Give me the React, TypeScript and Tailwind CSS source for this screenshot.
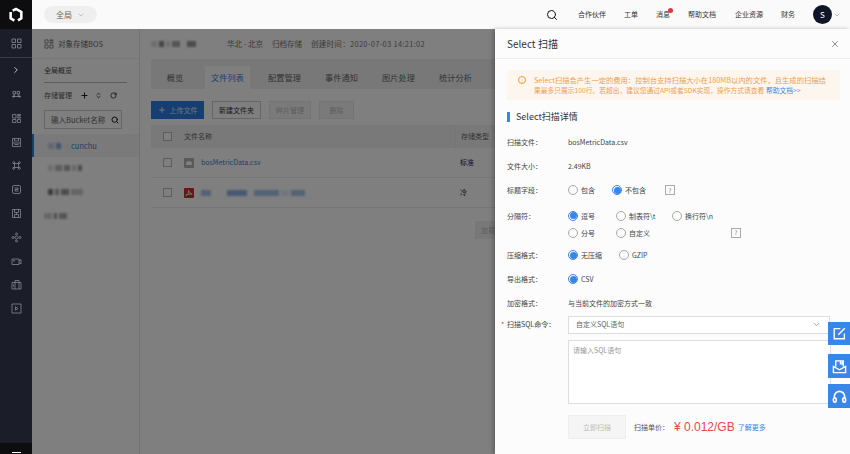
import React from "react";
import { ChevronDown, ChevronRight, Plus, RotateCw, Search, X, ChevronsUpDown } from "lucide-react";

const sideIcons = [
  <><path d="M4 5h5v5H4zM12 5h5v5h-5z" /><path d="M6.500 10v5M14.500 10v5M3 15h16" /><circle cx="5" cy="15" r="1.500" /><circle cx="17" cy="15" r="1.500" /></>,
  <><path d="M3 3h7v7H3zM3 13h7v6H3zM13 13h6v6h-6zM13 3h6v2h-6zM13 8h6v2h-6z" /></>,
  <><path d="M3 3h16v16H3zM7 3v5h8V3M3 12h16M7 15h8" /></>,
  <><path d="M7 7h8v8H7zM7 7H4a2 2 0 1 1 3-3zM15 7V4a2 2 0 1 1 3 3zM7 15v3a2 2 0 1 1-3-3zM15 15h3a2 2 0 1 1-3 3z" /></>,
  <><rect x="3" y="3" width="16" height="16" rx="3" /><path d="M7 8h7v3H8v3h7" /></>,
  <><path d="M3 3h16v16H3zM7 3v6h8V3M7 19v-6h8v6M11 9v4" /></>,
  <><circle cx="11" cy="11" r="3" /><circle cx="11" cy="4" r="2" /><circle cx="11" cy="18" r="2" /><circle cx="4" cy="11" r="2" /><circle cx="18" cy="11" r="2" /></>,
  <><path d="M2 6h14v11H2zM16 10l4-3v9l-4-3" /><circle cx="6" cy="9.500" r="1" /></>,
  <><path d="M2 7h18v13H2zM8 7V3h8v17M8 7v13M5 11v4" /></>,
  <><path d="M2 2h18v18H2zM9 7.500v7l5-3.500z" /></>,
];

const Mosaic = ({ items, className = "" }: { items: [number, string][]; className?: string }) => (
  <div className={`flex items-center gap-[2px] ${className}`}>
    {items.map(([w, c], i) => (
      <span key={i} className="h-[6px] blur-[1px]" style={{ width: w, backgroundColor: c }} />
    ))}
  </div>
);

const Radio = ({ on, label, className = "" }: { on?: boolean; label: string; className?: string }) => (
  <div className={`flex items-center gap-[3px] ${className}`}>
    <span className={`flex h-[10px] w-[10px] items-center justify-center rounded-full border ${on ? "border-[#3a86e8]" : "border-[#a8a8a8]"}`}>
      {on && <span className="h-[7px] w-[7px] rounded-full bg-[#3a86e8]" />}
    </span>
    <span>{label}</span>
  </div>
);

const Hint = ({ className = "" }: { className?: string }) => (
  <span className={`flex h-[10px] w-[10px] items-center justify-center border border-[#aaa] text-[6px] text-[#777] ${className}`}>?</span>
);

const FormRow = ({ label, children }: { label: string; children: React.ReactNode }) => (
  <div className="flex h-[24px] items-center">
    <div className="w-[61px] shrink-0">{label}</div>
    {children}
  </div>
);

const FloatBtn = ({ children, className = "" }: { children: React.ReactNode; className?: string }) => (
  <div className={`flex w-[22px] items-center justify-center bg-[#3a86e8] text-white ${className}`}>{children}</div>
);

export default function App() {
  return (
    <div className="relative flex h-[454px] w-[850px] overflow-hidden bg-white font-['Noto_Sans_CJK_SC','Noto_Sans',sans-serif] text-[7px] text-[#333]">
      {/* dark rail */}
      <aside className="flex w-[32px] shrink-0 flex-col items-center bg-[#1b1d28] text-[#8b8d94]">
        <div className="flex h-[29px] w-full items-center justify-center bg-[#0d0d0f]">
          <svg viewBox="0 0 24 24" className="h-[16px] w-[16px]" fill="none" stroke="white" strokeWidth="3.800">
            <path d="M7 5.500 12 3l8 4.500v9.500l-5 3M9.500 20.500 4 17V7.500" />
          </svg>
        </div>
        <div className="flex h-[29px] w-full items-center justify-center border-b border-[#3a3c46]">
          <svg viewBox="0 0 22 22" className="h-[11px] w-[11px]" fill="none" stroke="currentColor" strokeWidth="1.600">
            <path d="M2 2h7v7H2zM13 2h7v7h-7zM2 13h7v7H2zM13 13h7v7h-7z" />
          </svg>
        </div>
        <div className="flex h-[24px] items-center">
          <ChevronRight className="h-[10px] w-[10px] text-[#d8d8d8]" strokeWidth={2} />
        </div>
        <div className="mt-[7px] flex flex-col gap-[12.800px]">
          {sideIcons.map((icon, i) => (
            <svg key={i} viewBox="0 0 22 22" className="h-[11px] w-[11px]" fill="none" stroke="currentColor" strokeWidth="1.500">
              {icon}
            </svg>
          ))}
        </div>
        <div className="mt-auto flex h-[11px] w-full items-end justify-center bg-[#0d0d0f] pb-[1px]">
          <span className="h-[1px] w-[9px] bg-white" />
        </div>
      </aside>

      <div className="flex min-w-0 flex-1 flex-col">
        {/* top bar */}
        <header className="flex h-[29px] shrink-0 items-center bg-[#fafafa] pl-[12px] pr-[9px] text-[#333]">
          <div className="flex h-[17px] w-[53px] items-center justify-center gap-[5px] rounded-full bg-[#efefef] text-[#666]">
            <span className="text-[8px]">全局</span>
            <ChevronDown className="h-[8px] w-[8px] text-[#aaa]" />
          </div>
          <Search className="ml-auto h-[12px] w-[12px] text-[#111]" strokeWidth={2} />
          <span className="ml-[20px]">合作伙伴</span>
          <span className="ml-[18px]">工单</span>
          <span className="relative ml-[18px]">
            消息
            <span className="absolute right-[-3px] top-[-1px] h-[5px] w-[5px] rounded-full bg-[#e0363c]" />
          </span>
          <span className="ml-[18px]">帮助文档</span>
          <span className="ml-[19px]">企业资源</span>
          <span className="ml-[18px]">财务</span>
          <span className="ml-[18px] flex h-[19px] w-[19px] items-center justify-center rounded-full bg-[#101528] text-[8px] text-white">S</span>
          <ChevronDown className="ml-[1px] h-[8px] w-[8px] text-[#999]" />
        </header>

        <div className="relative flex min-h-0 flex-1">
          {/* second nav */}
          <nav className="w-[108px] shrink-0 border-r border-[#e4e4e4] bg-white">
            <div className="flex h-[30px] items-center gap-[4px] border-b border-[#f0f0f0] pl-[12px] text-[#666]">
              <svg viewBox="0 0 22 22" className="h-[10px] w-[10px]" fill="none" stroke="currentColor" strokeWidth="1.600">
                <path d="M2 2h7v7H2zM2 13h7v7H2zM13 13h7v7h-7zM13 2h7v2h-7zM13 7h7v2h-7z" />
              </svg>
              <span className="text-[7.500px]">对象存储BOS</span>
            </div>
            <div className="mx-[12px] flex h-[24px] items-center border-b border-[#bbb] text-[#444]">全局概览</div>
            <div className="ml-[12px] flex h-[27px] items-center pb-[3px] text-[#555]">
              <span>存储管理</span>
              <Plus className="ml-[8px] h-[9px] w-[9px] text-[#111]" strokeWidth={2.500} />
              <ChevronsUpDown className="ml-[6px] h-[7px] w-[7px] text-[#111]" strokeWidth={2.500} />
              <RotateCw className="ml-[8px] h-[7px] w-[7px] text-[#111]" strokeWidth={2.500} />
            </div>
            <div className="ml-[12px] flex h-[19px] w-[78px] items-center justify-between border border-[#ccc] pl-[6px] pr-[2px] text-[#666]">
              <span className="text-[7.500px]">输入Bucket名称</span>
              <Search className="h-[8px] w-[8px] text-[#222]" strokeWidth={3} />
            </div>
            <div className="mt-[5px] flex h-[23px] items-center border-l-2 border-[#2f7de0] bg-[#f4f5f7] pl-[14px] text-[#3a7fd5]">
              <Mosaic items={[[6, "#ccd"], [5, "#88a6d8"], [6, "#eee"]]} />
              <span className="ml-[2px] text-[7.500px]">cunchu</span>
            </div>
            <Mosaic className="ml-[16px] mt-[8px]" items={[[5, "#ddd"], [7, "#bbb"], [6, "#aaa"], [4, "#ccc"], [4, "#999"]]} />
            <Mosaic className="ml-[16px] mt-[18px]" items={[[5, "#777"], [4, "#aaa"], [8, "#999"], [12, "#ccc"]]} />
            <Mosaic className="ml-[12px] mt-[18px]" items={[[8, "#ccc"], [3, "#999"], [8, "#aaa"]]} />
          </nav>

          {/* bucket detail */}
          <main className="min-w-0 flex-1 bg-white pl-[11px]">
            <div className="flex h-[30px] items-center text-[7.500px] text-[#777]">
              <Mosaic items={[[6, "#ddd"], [5, "#888"], [4, "#ddd"], [8, "#aaa"], [3, "#fff"], [9, "#999"]]} />
              <span className="ml-[31px]">华北 - 北京</span>
              <span className="ml-[9px]">归档存储</span>
              <span className="ml-[9px] tracking-[0.3px]">创建时间：2020-07-03 14:21:02</span>
            </div>
            <div className="flex h-[30px] items-end bg-[#f1f1f1] text-[8.200px] text-[#666]">
              <div className="flex h-[23px] w-[48px] items-center justify-center">概览</div>
              <div className="ml-[6px] flex h-[23px] w-[45px] items-center justify-center bg-white text-[#3a7fd5]">文件列表</div>
              <div className="ml-[6px] flex h-[23px] w-[57px] items-center justify-center">配置管理</div>
              <div className="flex h-[23px] w-[57px] items-center justify-center">事件通知</div>
              <div className="flex h-[23px] w-[57px] items-center justify-center">图片处理</div>
              <div className="flex h-[23px] w-[57px] items-center justify-center">统计分析</div>
            </div>
            <div className="mt-[12px] flex h-[18px] gap-[8px] text-[#333]">
              <div className="flex w-[53px] items-center justify-center gap-[4px] bg-[#2f7de0] text-white/80">
                <Plus className="h-[8px] w-[8px] text-white" strokeWidth={2.500} />
                <span>上传文件</span>
              </div>
              <div className="flex w-[49px] items-center justify-center border border-[#ccc]">新建文件夹</div>
              <div className="flex w-[42px] items-center justify-center border border-[#e8e8e8] bg-[#f5f5f5] text-[#bbb]">碎片管理</div>
              <div className="flex w-[35px] items-center justify-center border border-[#e8e8e8] bg-[#f5f5f5] text-[#bbb]">删除</div>
            </div>
            <div className="mt-[6px] flex h-[23px] items-center bg-[#f3f3f3] pl-[12px] text-[#666]">
              <span className="h-[9px] w-[9px] border border-[#bbb] bg-white" />
              <span className="ml-[12px] w-[271px]">文件名称</span>
              <span className="flex h-full items-center border-l border-[#eaeaea] pl-[5px]">存储类型</span>
            </div>
            <div className="flex h-[30px] items-center border-b border-[#ececec] pl-[12px]">
              <span className="h-[9px] w-[9px] border border-[#bbb]" />
              <span className="ml-[12px] flex h-[10px] w-[10px] items-center justify-center rounded-[1px] bg-[#b5b5b5]">
                <span className="h-[4px] w-[6px] rounded-t-full bg-white" />
              </span>
              <span className="ml-[7px] w-[259px] text-[#3a7fd5]">bosMetricData.csv</span>
              <span className="text-[#222]">标准</span>
            </div>
            <div className="flex h-[30px] items-center border-b border-[#ececec] pl-[12px]">
              <span className="h-[9px] w-[9px] border border-[#bbb]" />
              <span className="ml-[12px] flex h-[10px] w-[10px] items-center justify-center rounded-[1px] bg-[#c9302c]">
                <svg viewBox="0 0 10 10" className="h-[8px] w-[8px]" fill="none" stroke="white" strokeWidth="1">
                  <path d="M1 8c3-1 4-4 3.500-6.500C5 4 7 6 9 6.500 6 6 3 7 1 8z" />
                </svg>
              </span>
              <Mosaic className="ml-[7px] w-[259px]" items={[[10, "#a8c4ea"], [12, "#fff"], [20, "#8fb3e4"], [3, "#fff"], [25, "#a8c4ea"], [8, "#e4ecf8"], [14, "#a8c4ea"]]} />
              <span className="text-[#222]">冷</span>
            </div>
            <div className="ml-[324px] mt-[13px] flex h-[18px] w-[20px] items-center bg-[#f0f0f0] pl-[6px] text-[#bbb]">加载</div>
          </main>

          {/* dim layer over the page behind the drawer */}
          <div className="absolute inset-0 bg-black/50" />

          {/* drawer */}
          <section className="absolute bottom-0 right-0 top-0 w-[355px] bg-[#fcfcfc] shadow-[-2px_0_4px_rgba(0,0,0,0.25)]">
            <div className="flex h-[30px] items-center justify-between border-b border-[#eee] pl-[12px] pr-[10px]">
              <span className="text-[10px] text-[#333]">Select 扫描</span>
              <X className="h-[10px] w-[10px] text-[#666]" strokeWidth={1.800} />
            </div>
            <div className="ml-[12px] mr-[10px] mt-[11px] flex h-[30px] w-[333px] bg-[#fdf6ee] pl-[11px] pt-[5px] leading-[10px] text-[#f0a050]">
              <span className="mt-[1px] flex h-[8px] w-[8px] shrink-0 items-center justify-center rounded-full border border-[#ee9a3e] text-[5px] leading-none">!</span>
              <div className="ml-[8px] whitespace-nowrap">
                <p className="text-[7.300px]">Select扫描会产生一定的费用：控制台支持扫描大小在180MB以内的文件，且生成的扫描结</p>
                <p className="text-[6.750px]">
                  果最多只展示100行。若超出，建议您通过API或者SDK实现，操作方式请查看 <span className="text-[#3a86e8]">帮助文档&gt;&gt;</span>
                </p>
              </div>
            </div>
            <div className="ml-[12px] mt-[11px] flex h-[12px] items-center">
              <span className="h-[10px] w-[3px] bg-[#3a86e8]" />
              <span className="ml-[6px] text-[9px] text-[#333]">Select扫描详情</span>
            </div>

            <div className="ml-[12px] mt-[7px] flex flex-col text-[#444]">
              <FormRow label="扫描文件：">bosMetricData.csv</FormRow>
              <FormRow label="文件大小：">2.49KB</FormRow>
              <FormRow label="标题字段：">
                <div className="flex items-center">
                  <Radio label="包含" className="w-[44px]" />
                  <Radio on label="不包含" className="w-[53px]" />
                  <Hint />
                </div>
              </FormRow>
              <div className="flex h-[41px] pt-[8.500px]">
                <div className="w-[61px] shrink-0 leading-[10px]">分隔符：</div>
                <div className="grid grid-cols-[48px_56px_59px_10px] content-start gap-y-[6.500px]">
                  <Radio on label="逗号" />
                  <Radio label="制表符\t" />
                  <Radio label="换行符\n" />
                  <span />
                  <Radio label="分号" />
                  <Radio label="自定义" />
                  <span />
                  <Hint />
                </div>
              </div>
              <FormRow label="压缩格式：">
                <div className="flex">
                  <Radio on label="无压缩" className="w-[51px]" />
                  <Radio label="GZIP" />
                </div>
              </FormRow>
              <FormRow label="导出格式：">
                <Radio on label="CSV" />
              </FormRow>
              <FormRow label="加密格式：">与当前文件的加密方式一致</FormRow>
              <div className="flex h-[19px] items-center">
                <div className="relative w-[61px] shrink-0">
                  <span className="absolute left-[-6px] top-0 text-[#e0363c]">*</span>
                  扫描SQL命令：
                </div>
                <div className="flex h-[18px] w-[262px] items-center justify-between border border-[#ddd] bg-white pl-[7px] pr-[8px] text-[#666]">
                  <span>自定义SQL语句</span>
                  <ChevronDown className="h-[9px] w-[9px] text-[#888]" />
                </div>
              </div>
              <div className="ml-[61px] mt-[6px] h-[64px] w-[263px] border border-[#ddd] bg-white px-[4px] py-[4px] text-[#999]">请输入SQL语句</div>
              <div className="ml-[61px] mt-[11px] flex items-center">
                <div className="flex h-[24px] w-[58px] items-center justify-center border border-[#eee] bg-[#f5f5f5] text-[#bbb]">立即扫描</div>
                <span className="ml-[8px] text-[#555]">扫描单价：</span>
                <span className="ml-[5px] font-['Liberation_Sans',sans-serif] text-[12px] leading-none text-[#e34a4a]">¥ 0.012/GB</span>
                <span className="ml-[3px] text-[#3a86e8]">了解更多</span>
              </div>
            </div>
          </section>
        </div>
      </div>

      {/* floating helpers */}
      <div className="absolute right-0 top-[322px] flex flex-col">
        <FloatBtn className="h-[23px]">
          <svg viewBox="0 0 16 16" className="h-[13px] w-[13px]" fill="none" stroke="currentColor" strokeWidth="1.700">
            <path d="M14 8v6.500H1.500V2H9M6.500 9.500 14.500 1.500" />
          </svg>
        </FloatBtn>
        <FloatBtn className="mt-[9px] h-[24px]">
          <svg viewBox="0 0 16 16" className="h-[15px] w-[15px]" fill="none" stroke="currentColor" strokeWidth="1.500">
            <path d="M1.500 8v6.500h13V8L8 11.500zM4 8V2h8v6M9 2v3h2V2" />
          </svg>
        </FloatBtn>
        <FloatBtn className="mt-[6px] h-[24px]">
          <svg viewBox="0 0 16 16" className="h-[15px] w-[15px]" fill="none" stroke="currentColor" strokeWidth="1.700">
            <path d="M2.500 10V8a5.500 5.500 0 0 1 11 0v2" />
            <rect x="1.500" y="9.500" width="3" height="4.500" rx="1.500" />
            <rect x="11.500" y="9.500" width="3" height="4.500" rx="1.500" />
          </svg>
        </FloatBtn>
      </div>
    </div>
  );
}
